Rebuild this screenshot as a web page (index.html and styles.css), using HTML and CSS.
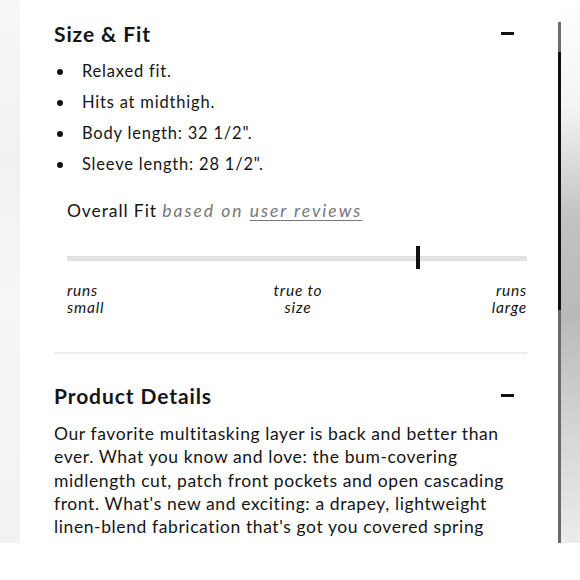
FILE: index.html
```html
<!DOCTYPE html>
<html>
<head>
<meta charset="utf-8">
<link rel="stylesheet" href="styles.css">
</head>
<body>
<div class="frame">
  <div class="edge-left"></div>
  <main class="panel">
    <section class="section">
      <div class="section-head">
        <h2>Size &amp; Fit</h2>
        <span class="minus"></span>
      </div>
      <ul class="bullets">
        <li>Relaxed fit.</li>
        <li>Hits at midthigh.</li>
        <li>Body length: 32 1/2".</li>
        <li>Sleeve length: 28 1/2".</li>
      </ul>
      <div class="fit">
        <div class="fit-title">Overall Fit <span class="fit-sub">based on <u>user reviews</u></span></div>
        <div class="track"><span class="marker" style="left: 75.8%"></span></div>
        <div class="fit-labels">
          <span class="lbl-left">runs<br>small</span>
          <span class="lbl-mid">true to<br>size</span>
          <span class="lbl-right">runs<br>large</span>
        </div>
      </div>
      <hr class="divider">
    </section>
    <section class="section">
      <div class="section-head">
        <h2>Product Details</h2>
        <span class="minus"></span>
      </div>
      <p class="details">Our favorite multitasking layer is back and better than ever. What you know and love: the bum-covering midlength cut, patch front pockets and open cascading front. What's new and exciting: a drapey, lightweight linen-blend fabrication that's got you covered spring</p>
    </section>
  </main>
  <div class="scroll">
    <div class="scroll-top"></div>
    <div class="scroll-thumb"></div>
    <div class="scroll-rest"></div>
  </div>
  <div class="edge-right"></div>
</div>
</body>
</html>
```

FILE: styles.css
```css
html, body {
  margin: 0;
  padding: 0;
  background: #ffffff;
}

body {
  width: 580px;
  height: 580px;
  overflow: hidden;
  font-family: "Lato", "Open Sans", sans-serif;
  color: #151515;
}

.frame {
  display: flex;
  height: 543px;
}

.edge-left {
  width: 20px;
  flex: none;
  background: linear-gradient(to bottom, #f7f7f7 0%, #f1f1f1 30%, #f6f6f6 55%, #f2f2f2 100%);
}

.panel {
  width: 538px;
  flex: none;
  background: #fff;
  overflow: hidden;
  padding: 0 31px 0 34px;
  box-sizing: border-box;
}

.scroll {
  width: 3px;
  flex: none;
  display: flex;
  flex-direction: column;
  padding-top: 22px;
}

.scroll-top {
  height: 30px;
  background: #6e6e6e;
}

.scroll-thumb {
  height: 258px;
  background: #111;
}

.scroll-rest {
  flex: 1;
  background: #6a6a6a;
}

.edge-right {
  flex: 1;
  background: linear-gradient(to bottom, #ffffff 0%, #f4f4f4 20%, #c2c2c2 40%, #b9b9b9 58%, #d6d6d6 80%, #ececec 100%);
}

.section-head {
  display: flex;
  justify-content: space-between;
  align-items: center;
  padding-right: 13px;
}

.section-head h2 {
  margin: 0;
  font-size: 21px;
  font-weight: 700;
  letter-spacing: 0.9px;
}

.section:first-child .section-head {
  padding-top: 21px;
  height: 24px;
}

.minus {
  width: 13px;
  height: 3px;
  background: #111;
  display: block;
}

.bullets {
  list-style: none;
  margin: 11px 0 0;
  padding: 0;
}

.bullets li {
  position: relative;
  padding-left: 28px;
  font-size: 16.5px;
  line-height: 31px;
  letter-spacing: 0.8px;
}

.bullets li::before {
  content: "";
  position: absolute;
  left: 3px;
  top: 13px;
  width: 6px;
  height: 6px;
  border-radius: 50%;
  background: #111;
}

.fit {
  padding: 19px 0 0 13px;
}

.fit-title {
  font-size: 17.5px;
  line-height: 24px;
  letter-spacing: 0.9px;
}

.fit-sub {
  font-style: italic;
  color: #777;
  letter-spacing: 2px;
}

.fit-sub u {
  text-underline-offset: 3px;
  text-decoration-thickness: 1px;
}

.track {
  position: relative;
  height: 5px;
  background: #e2e2e2;
  margin-top: 33px;
}

.marker {
  position: absolute;
  top: -10px;
  width: 4px;
  height: 23px;
  background: #111;
}

.fit-labels {
  display: flex;
  justify-content: space-between;
  margin-top: 21px;
  font-style: italic;
  font-size: 15.5px;
  line-height: 17px;
  letter-spacing: 0.8px;
}

.lbl-left { text-align: left; width: 80px; }
.lbl-mid { text-align: center; width: 80px; margin-left: 2px; }
.lbl-right { text-align: right; width: 80px; }

.divider {
  border: none;
  border-top: 2px solid #ececec;
  margin: 36px 0 0 0;
}

.section:last-child .section-head {
  padding-top: 29px;
  height: 24px;
}

.details {
  margin: 15px 0 0;
  font-size: 17.5px;
  line-height: 23.3px;
  letter-spacing: 0.6px;
}
```
